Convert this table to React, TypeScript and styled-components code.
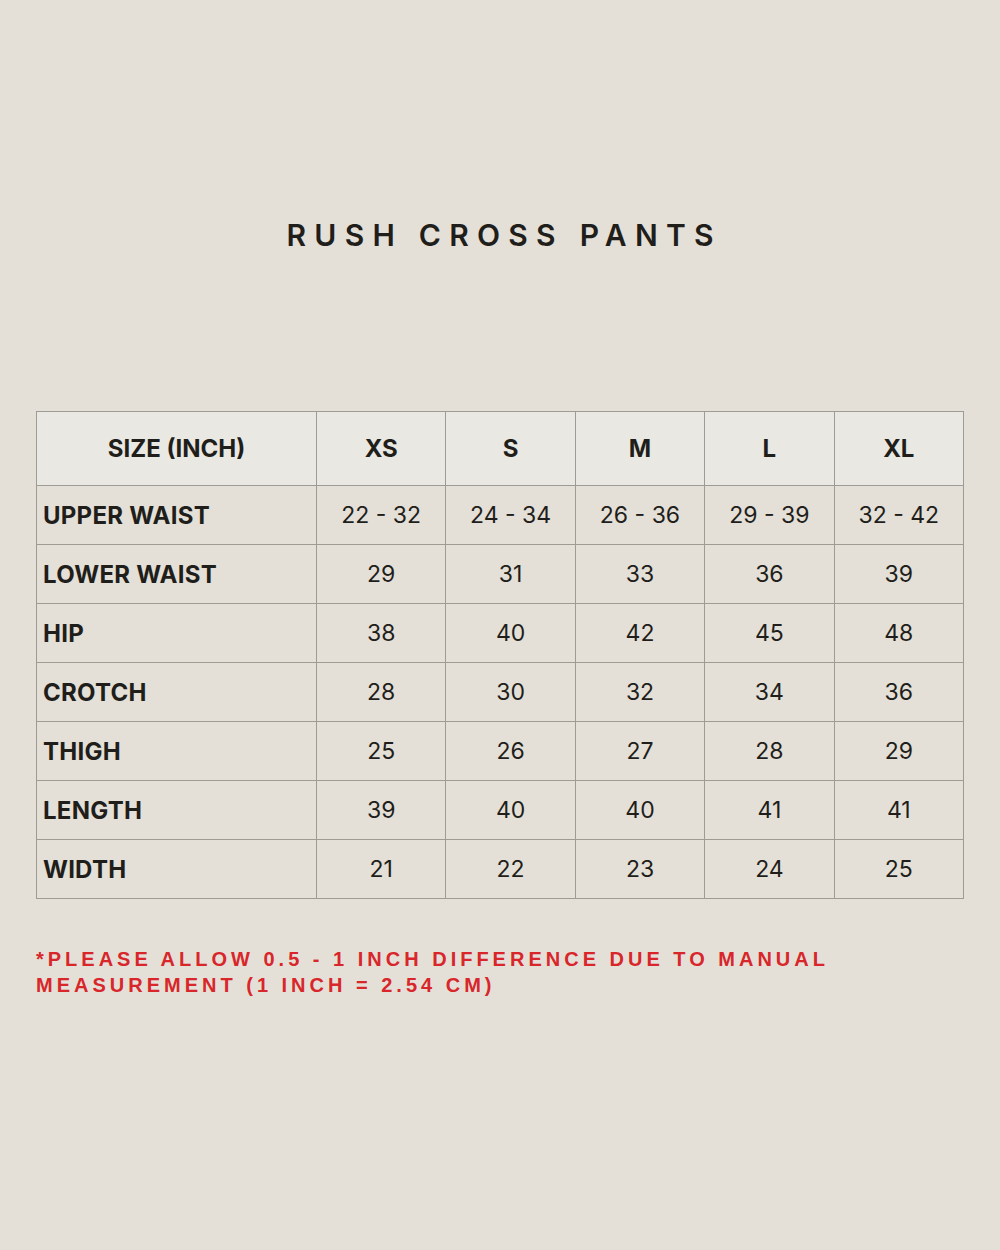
import React from "react";
import styled, { createGlobalStyle } from "styled-components";

const Global = createGlobalStyle`
  html, body { margin: 0; padding: 0; background: #e4e0d7; }
  body { font-family: Inter, "Liberation Sans", sans-serif; }
`;

const Page = styled.div`
  width: 1000px;
  height: 1250px;
  box-sizing: border-box;
  padding: 217px 36px 0 36px;
  display: flex;
  flex-direction: column;
  background: #e4e0d7;
`;

const Title = styled.h1`
  margin: 0;
  text-align: center;
  font-family: Inter, "Liberation Sans", sans-serif;
  font-weight: 600;
  font-size: 30px;
  line-height: 36px;
  letter-spacing: 0.275em;
  padding-left: 0.275em;
  color: #1f1e1b;
`;

const Table = styled.div`
  margin-top: 158px;
  display: grid;
  grid-template-columns: 280px repeat(5, 1fr);
  grid-template-rows: 74px;
  grid-auto-rows: 59px;
  border-top: 1px solid #9e9b95;
  border-left: 1px solid #9e9b95;
  width: 928px;
  box-sizing: border-box;
`;

const Row = styled.div`
  display: contents;
`;

const Cell = styled.div<{ $head?: boolean; $label?: boolean }>`
  display: flex;
  align-items: center;
  justify-content: ${(p) => (p.$label ? "flex-start" : "center")};
  padding-left: ${(p) => (p.$label ? "6px" : "0")};
  border-right: 1px solid #9e9b95;
  border-bottom: 1px solid #9e9b95;
  background: ${(p) => (p.$head ? "#eae8e3" : "transparent")};
  font-family: Inter, "Liberation Sans", sans-serif;
  font-size: ${(p) => (p.$head || p.$label ? "24px" : "23px")};
  letter-spacing: ${(p) => (p.$label ? "0.01em" : "0")};
  font-weight: ${(p) => (p.$head || p.$label ? 700 : 400)};
  color: #1f1e1b;
  box-sizing: border-box;
`;

const Note = styled.p`
  margin: 47px 0 0 0;
  font-family: "Liberation Sans", Arial, sans-serif;
  font-weight: 700;
  font-size: 20px;
  line-height: 26px;
  letter-spacing: 4px;
  color: #d8262b;
  max-width: 830px;
`;

const sizes = ["XS", "S", "M", "L", "XL"];
const rows: [string, string[]][] = [
  ["UPPER WAIST", ["22 - 32", "24 - 34", "26 - 36", "29 - 39", "32 - 42"]],
  ["LOWER WAIST", ["29", "31", "33", "36", "39"]],
  ["HIP", ["38", "40", "42", "45", "48"]],
  ["CROTCH", ["28", "30", "32", "34", "36"]],
  ["THIGH", ["25", "26", "27", "28", "29"]],
  ["LENGTH", ["39", "40", "40", "41", "41"]],
  ["WIDTH", ["21", "22", "23", "24", "25"]],
];

export default function App() {
  return (
    <>
      <Global />
      <Page>
        <Title>RUSH CROSS PANTS</Title>
        <Table>
          <Row>
            <Cell $head>SIZE (INCH)</Cell>
            {sizes.map((s) => (
              <Cell $head key={s}>
                {s}
              </Cell>
            ))}
          </Row>
          {rows.map(([label, vals]) => (
            <Row key={label}>
              <Cell $label>{label}</Cell>
              {vals.map((v, i) => (
                <Cell key={i}>{v}</Cell>
              ))}
            </Row>
          ))}
        </Table>
        <Note>
          *PLEASE ALLOW 0.5 - 1 INCH DIFFERENCE DUE TO MANUAL MEASUREMENT (1 INCH = 2.54 CM)
        </Note>
      </Page>
    </>
  );
}
